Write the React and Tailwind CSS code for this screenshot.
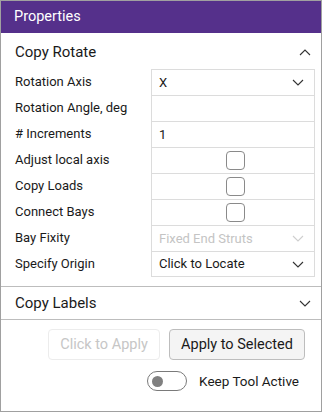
import React from "react";

const Chevron = ({ up = false, color = "#333" }) => (
  <svg width="12" height="7" viewBox="0 0 12 7" fill="none">
    <path
      d={up ? "M1 6 L6 1 L11 6" : "M1 1 L6 6 L11 1"}
      stroke={color}
      strokeWidth="1.1"
    />
  </svg>
);

const Row = ({ label, children, last }) => (
  <div className="flex h-[26px]">
    <div className="w-[136px] flex items-center text-[13px] text-[#1a1a1a]">{label}</div>
    <div
      className={`flex-1 flex items-center border-l border-r border-t border-[#dcdcdc] ${
        last ? "border-b" : ""
      }`}
    >
      {children}
    </div>
  </div>
);

const Select = ({ value, disabled }) => (
  <div className="flex-1 flex items-center justify-between pl-[7px] pr-[10px]">
    <span className={`text-[13px] ${disabled ? "text-[#c4c4c4]" : "text-[#1a1a1a]"}`}>{value}</span>
    <Chevron color={disabled ? "#cfcfcf" : "#333"} />
  </div>
);

const Check = () => (
  <div className="flex-1 flex items-center justify-center pl-[4px]">
    <div className="w-[19px] h-[19px] rounded-[4px] border border-[#8a8a8a] bg-white" />
  </div>
);

export default function App() {
  return (
    <div className="w-[322px] h-[412px] border border-[#a0a0a0] bg-white flex flex-col font-['Roboto',sans-serif] overflow-hidden">
      <div className="h-[32px] bg-[#55308b] flex items-center px-[13px] text-white text-[14.5px] shrink-0">
        Properties
      </div>
      <div className="h-[36px] flex items-center justify-between pl-[14px] pr-[10px] pt-[2px] shrink-0">
        <span className="text-[15px] text-[#1a1a1a]">Copy Rotate</span>
        <Chevron up />
      </div>
      <div className="pl-[14px] pr-[6px] flex flex-col">
        <Row label="Rotation Axis">
          <Select value="X" />
        </Row>
        <Row label="Rotation Angle, deg" />
        <Row label="# Increments">
          <span className="pl-[7px] text-[13px] text-[#1a1a1a]">1</span>
        </Row>
        <Row label="Adjust local axis">
          <Check />
        </Row>
        <Row label="Copy Loads">
          <Check />
        </Row>
        <Row label="Connect Bays">
          <Check />
        </Row>
        <Row label="Bay Fixity">
          <Select value="Fixed End Struts" disabled />
        </Row>
        <Row label="Specify Origin" last>
          <Select value="Click to Locate" />
        </Row>
      </div>
      <div className="mt-[9px] border-t border-[#bdbdbd] h-[34px] flex items-center justify-between pl-[14px] pr-[10px] shrink-0 border-b">
        <span className="text-[15px] text-[#1a1a1a]">Copy Labels</span>
        <Chevron />
      </div>
      <div className="flex justify-end gap-[9px] pr-[16px] mt-[9px]">
        <div className="w-[112px] h-[31px] rounded-[4px] border border-[#ececec] flex items-center justify-center text-[14.5px] text-[#c6c6c6]">
          Click to Apply
        </div>
        <div className="w-[136px] h-[31px] rounded-[4px] border border-[#bdbdbd] bg-[#f4f4f4] flex items-center justify-center text-[14.5px] text-[#1a1a1a]">
          Apply to Selected
        </div>
      </div>
      <div className="flex items-center justify-end pr-[22px] mt-[11px] gap-[12px]">
        <div className="w-[40px] h-[20px] rounded-full border border-[#7a7a7a] flex items-center pl-[4px]">
          <div className="w-[11px] h-[11px] rounded-full bg-[#808080]" />
        </div>
        <span className="text-[13.5px] text-[#1a1a1a]">Keep Tool Active</span>
      </div>
    </div>
  );
}
